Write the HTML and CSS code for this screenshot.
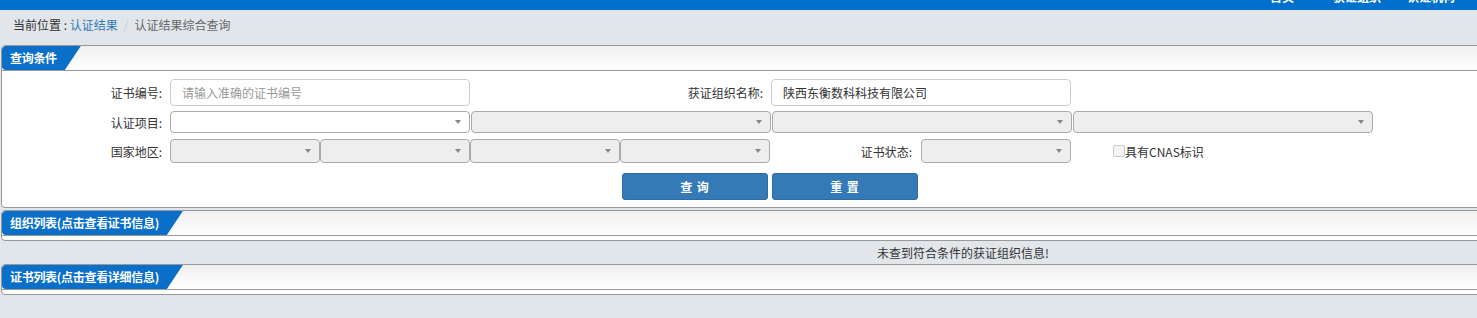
FILE: index.html
```html
<!DOCTYPE html>
<html lang="zh-CN">
<head>
    <meta charset="UTF-8">
    <title>认证结果综合查询</title>
    <link rel="stylesheet" href="styles.css">
</head>
<body>
    <div class="topbar">
        <div class="nav">
            <a class="home">首页</a>
            <a>获证组织</a>
            <a>认证机构</a>
        </div>
    </div>

    <div class="breadcrumb">
        当前位置 : <a>认证结果</a><span class="sep">/</span><span class="current">认证结果综合查询</span>
    </div>

    <div class="panel">
        <div class="panel-head"><span class="tab">查询条件</span></div>
        <div class="panel-body form">
            <div class="row row-input">
                <label class="lbl">证书编号:</label>
                <div class="input placeholder">请输入准确的证书编号</div>
                <label class="lbl lbl-wide">获证组织名称:</label>
                <div class="input">陕西东衡数科科技有限公司</div>
            </div>
            <div class="row row-select">
                <label class="lbl">认证项目:</label>
                <div class="select"></div>
                <div class="select disabled"></div>
                <div class="select disabled"></div>
                <div class="select disabled"></div>
            </div>
            <div class="row row-region">
                <label class="lbl">国家地区:</label>
                <div class="select small disabled"></div>
                <div class="select small disabled"></div>
                <div class="select small disabled"></div>
                <div class="select small disabled"></div>
                <label class="lbl lbl-status">证书状态:</label>
                <div class="select small disabled"></div>
                <label class="check"><span class="box"></span>具有CNAS标识</label>
            </div>
            <div class="row row-buttons">
                <button class="btn">查 询</button>
                <button class="btn">重 置</button>
            </div>
        </div>
    </div>

    <div class="panel panel-list">
        <div class="panel-head"><span class="tab">组织列表(点击查看证书信息)</span></div>
        <div class="panel-body"></div>
    </div>
    <div class="empty-msg">未查到符合条件的获证组织信息!</div>

    <div class="panel panel-list panel-cert">
        <div class="panel-head"><span class="tab">证书列表(点击查看详细信息)</span></div>
        <div class="panel-body"></div>
    </div>
</body>
</html>
```

FILE: styles.css
```css
body {
    margin: 0;
    background-color: #e1e6ea;
    font-family: "Noto Sans CJK SC", "Liberation Sans", sans-serif;
    font-size: 12px;
    color: #333;
    overflow-x: hidden;
}
.topbar {
    height: 10px;
    background-color: #0070cc;
    overflow: hidden;
}
.nav {
    display: flex;
    justify-content: flex-end;
    padding-right: 22px;
    margin-top: -9px;
    line-height: 12px;
}
.nav a {
    color: #fff;
    font-weight: bold;
    margin-left: 26px;
}
.nav .home {
    margin-right: 13px;
}
.breadcrumb {
    height: 35px;
    line-height: 30px;
    padding-left: 13px;
    color: #333;
}
.breadcrumb a {
    color: #337ab7;
}
.breadcrumb .sep {
    color: #ccc;
    margin: 0 6px;
}
.breadcrumb .current {
    color: #666;
}

.panel {
    margin: 0 -6px 0 1px;
    border: 1px solid #999;
    border-radius: 4px;
    background-color: #fff;
    overflow: hidden;
}
.panel-head {
    height: 24px;
    border-bottom: 1px solid #999;
    background: linear-gradient(#f0f0f0, #fff);
}
.tab {
    display: inline-block;
    height: 24px;
    line-height: 23px;
    padding: 0 24px 0 8px;
    background-color: #0a6fc9;
    color: #fff;
    font-weight: bold;
    letter-spacing: -0.3px;
    border-radius: 4px 0 0 4px;
    clip-path: polygon(0 0, 100% 0, calc(100% - 16px) 100%, 0 100%);
}

.form {
    padding: 8px 0 5px 0;
    height: 123px;
}
.row {
    display: flex;
    align-items: center;
}
.lbl {
    width: 160px;
    margin-right: 8px;
    text-align: right;
    color: #333;
}
.lbl-wide {
    width: 293px;
}
.lbl-status {
    width: 142px;
    margin-right: 9px;
}
.row-input {
    height: 27px;
}
.row-select {
    height: 22px;
    margin-top: 5px;
}
.row-region {
    height: 24px;
    margin-top: 6px;
}
.row-buttons {
    height: 27px;
    margin-top: 10px;
    padding-left: 620px;
}
.input {
    box-sizing: border-box;
    width: 300px;
    height: 27px;
    line-height: 25px;
    padding-left: 11px;
    border: 1px solid #ccc;
    border-radius: 4px;
    color: #333;
}
.input.placeholder {
    color: #999;
}
.select {
    position: relative;
    box-sizing: border-box;
    width: 300px;
    height: 100%;
    margin-right: 1px;
    border: 1px solid #aaa;
    border-radius: 4px;
    background-color: #fff;
}
.select.disabled {
    background-color: #eee;
}
.select.small {
    width: 150px;
    margin-right: 0;
}
.select::after {
    content: "";
    position: absolute;
    right: 8px;
    top: 50%;
    margin-top: -2px;
    border-left: 3px solid transparent;
    border-right: 3px solid transparent;
    border-top: 4px solid #888;
}
.check {
    display: flex;
    align-items: center;
    margin-left: 42px;
    color: #333;
}
.check .box {
    box-sizing: border-box;
    width: 12px;
    height: 12px;
    border: 1px solid #ccc;
    border-radius: 2px;
    background-color: #f4f4f4;
}
.btn {
    width: 146px;
    height: 27px;
    margin-right: 4px;
    border: 1px solid #2e6da4;
    border-radius: 3px;
    background-color: #337ab7;
    color: #fff;
    font-family: inherit;
    font-size: 12px;
    font-weight: bold;
    letter-spacing: 1px;
}

.panel-list {
    margin-top: 2px;
}
.panel-list .panel-body {
    height: 4px;
}
.empty-msg {
    height: 23px;
    line-height: 23px;
    padding-left: 877px;
    color: #333;
}
.panel-cert {
    margin-top: 0;
}
```
